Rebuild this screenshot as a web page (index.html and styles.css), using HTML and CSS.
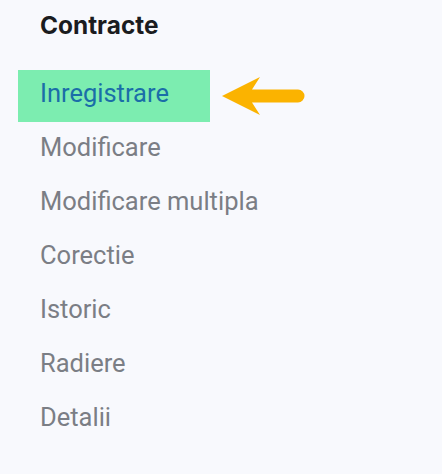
FILE: index.html
```html
<!DOCTYPE html>
<html lang="ro">
<head>
<meta charset="utf-8">
<title>Contracte</title>
<link rel="stylesheet" href="styles.css">
</head>
<body>
<nav class="sidebar">
  <h2 class="title">Contracte</h2>
  <ul class="menu">
    <li class="item active">Inregistrare
      <svg class="pointer" width="86" height="42" viewBox="0 0 86 42" aria-hidden="true">
        <path d="M1 20 L39 1 L31 13.5 L77 13.5 A6.5 6.5 0 0 1 77 26.5 L31 26.5 L39 39 Z" fill="#fbb300"/>
      </svg>
    </li>
    <li class="item">Modificare</li>
    <li class="item">Modificare multipla</li>
    <li class="item">Corectie</li>
    <li class="item">Istoric</li>
    <li class="item">Radiere</li>
    <li class="item">Detalii</li>
  </ul>
</nav>
</body>
</html>
```

FILE: styles.css
```css
html, body {
  margin: 0;
  padding: 0;
  background: #f8f9fd;
}
body {
  width: 442px;
  height: 474px;
  overflow: hidden;
}
.sidebar {
  padding: 0 0 0 18px;
}
.title {
  margin: 0;
  padding: 10px 0 0 22px;
  height: 70px;
  box-sizing: border-box;
  font-family: Inter, "Liberation Sans", sans-serif;
  font-weight: 700;
  font-size: 24.4px;
  line-height: 30px;
  color: #1b1c1f;
}
.menu {
  list-style: none;
  margin: 0;
  padding: 0;
  display: flex;
  flex-direction: column;
  gap: 2px;
}
.item {
  position: relative;
  width: 192px;
  height: 52px;
  box-sizing: border-box;
  padding: 8px 0 0 22px;
  font-family: Roboto, "Liberation Sans", sans-serif;
  font-size: 25.5px;
  line-height: 30px;
  color: #7b7e85;
  white-space: nowrap;
}
.item.active {
  background: #7cedb0;
  color: #1a6ea8;
}
.pointer {
  position: absolute;
  left: 203px;
  top: 6px;
}
```
